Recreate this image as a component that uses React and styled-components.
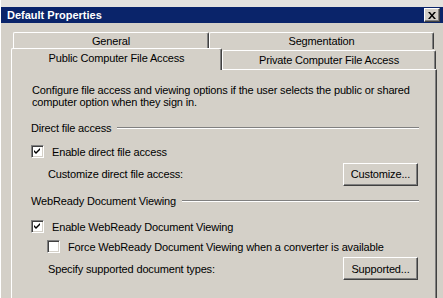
import React from 'react';
import styled, { createGlobalStyle } from 'styled-components';

const GlobalStyle = createGlobalStyle`
	html, body {
		margin: 0;
		padding: 0;
		width: 443px;
		height: 298px;
		overflow: hidden;
		background: #d4d0c8;
	}
	body {
		font-family: "Liberation Sans", Arial, sans-serif;
		font-size: 11px;
		letter-spacing: -0.15px;
		color: #000;
	}
`;

const Window = styled.div`
	width: 443px;
	height: 298px;
	overflow: hidden;
	background: #d4d0c8;
	border-left: 1px solid #ffffff;
	box-sizing: border-box;
	display: flex;
	flex-direction: column;
	white-space: nowrap;
`;

const TopStrip = styled.div`
	height: 7px;
	background: #e4e2de;
`;

const TitleBar = styled.div`
	height: 16px;
	background: #0a246a;
	display: flex;
	align-items: center;
	justify-content: space-between;
	padding: 0 3px 0 6px;
	color: #ffffff;
	font-weight: bold;
	font-size: 11px;
	letter-spacing: 0;
`;

const CloseBtn = styled.div`
	width: 14px;
	height: 12px;
	background: #d4d0c8;
	border-top: 1px solid #ffffff;
	border-left: 1px solid #ffffff;
	border-right: 1px solid #404040;
	border-bottom: 1px solid #404040;
	box-shadow: inset -1px -1px 0 #808080;
	display: flex;
	align-items: center;
	justify-content: center;
`;

const Body = styled.div`
	padding: 9px 6px 0 10px;
	display: flex;
	flex-direction: column;
	flex: 1;
`;

const TabRow = styled.div`
	display: flex;
	align-items: flex-end;
	height: ${p => p.$h}px;
	padding-left: ${p => p.$indent || 0}px;
`;

const Tab = styled.div`
	width: ${p => p.$w}px;
	height: ${p => p.$h}px;
	box-sizing: border-box;
	background: #d4d0c8;
	border-top: 1px solid #ffffff;
	border-left: 1px solid #ffffff;
	border-right: 1px solid #404040;
	border-radius: 2px 2px 0 0;
	box-shadow: inset -1px 0 0 #808080;
	display: flex;
	align-items: center;
	justify-content: center;
	padding-bottom: ${p => (p.$active ? 3 : 1)}px;
	${p =>
		p.$active &&
		`
		position: relative;
		z-index: 1;
		margin-bottom: -1px;
		height: ${p.$h + 1}px;
	`}
`;

const Panel = styled.div`
	flex: 1;
	background: #d4d0c8;
	border-top: 1px solid #ffffff;
	border-left: 1px solid #ffffff;
	border-right: 1px solid #404040;
	box-shadow: inset -1px 0 0 #808080;
	padding: 14px 18px 0 19px;
	display: flex;
	flex-direction: column;
`;

const Desc = styled.div`
	line-height: 12px;
	margin-left: 1px;
`;

const GroupHeader = styled.div`
	display: flex;
	align-items: center;
	height: 13px;
	margin-top: ${p => p.$mt}px;
	margin-right: -1px;
	gap: 6px;
	&::after {
		content: '';
		flex: 1;
		height: 0;
		border-top: 1px solid #808080;
		border-bottom: 1px solid #ffffff;
	}
`;

const Row = styled.div`
	display: flex;
	align-items: center;
	justify-content: space-between;
	height: ${p => p.$h}px;
	margin-top: ${p => p.$mt}px;
	padding-left: ${p => p.$indent || 0}px;
`;

const CheckRow = styled.label`
	display: flex;
	align-items: center;
	gap: 8px;
	height: 13px;
	margin-top: ${p => p.$mt}px;
	padding-left: ${p => p.$indent || 0}px;
`;

const Box = styled.span`
	width: 13px;
	height: 13px;
	box-sizing: border-box;
	background: #ffffff;
	border-top: 1px solid #808080;
	border-left: 1px solid #808080;
	border-right: 1px solid #ffffff;
	border-bottom: 1px solid #ffffff;
	box-shadow: inset 1px 1px 0 #404040, inset -1px -1px 0 #d4d0c8;
	display: flex;
	align-items: center;
	justify-content: center;
	flex-shrink: 0;
`;

const Button = styled.div`
	width: 75px;
	height: 23px;
	box-sizing: border-box;
	background: #d4d0c8;
	border-top: 1px solid #ffffff;
	border-left: 1px solid #ffffff;
	border-right: 1px solid #404040;
	border-bottom: 1px solid #404040;
	box-shadow: inset -1px -1px 0 #808080;
	display: flex;
	align-items: center;
	justify-content: center;
`;

const Check = ({ checked, children, mt, indent }) => (
	<CheckRow $mt={mt} $indent={indent}>
		<Box>
			{checked && (
				<svg width="7" height="7" viewBox="0 0 7 7">
					<path d="M0 2 L2 4 L6 0 V2 L2 6 L0 4 Z" fill="#000" />
				</svg>
			)}
		</Box>
		<span>{children}</span>
	</CheckRow>
);

const App = () => {
	return (
		<Window>
			<GlobalStyle />
			<TopStrip />
			<TitleBar>
				<span>Default Properties</span>
				<CloseBtn>
					<svg width="8" height="7" viewBox="0 0 8 7">
						<path d="M0 0h2l2 2.5L6 0h2L5 3.5 8 7H6L4 4.5 2 7H0l3-3.5z" fill="#000" />
					</svg>
				</CloseBtn>
			</TitleBar>
			<Body>
				<TabRow $h={17} $indent={2}>
					<Tab $w={196} $h={17}>General</Tab>
					<Tab $w={225} $h={17}>Segmentation</Tab>
				</TabRow>
				<TabRow $h={20}>
					<Tab $w={211} $h={21} $active>Public Computer File Access</Tab>
					<Tab $w={214} $h={19}>Private Computer File Access</Tab>
				</TabRow>
				<Panel>
					<Desc>
						Configure file access and viewing options if the user selects the public or shared
						<br />
						computer option when they sign in.
					</Desc>
					<GroupHeader $mt={13}>Direct file access</GroupHeader>
					<Check checked mt={11}>Enable direct file access</Check>
					<Row $h={24} $mt={4} $indent={17}>
						<span>Customize direct file access:</span>
						<Button>Customize...</Button>
					</Row>
					<GroupHeader $mt={8}>WebReady Document Viewing</GroupHeader>
					<Check checked mt={13}>Enable WebReady Document Viewing</Check>
					<Check mt={7} indent={16}>
						Force WebReady Document Viewing when a converter is available
					</Check>
					<Row $h={23} $mt={4} $indent={17}>
						<span>Specify supported document types:</span>
						<Button>Supported...</Button>
					</Row>
				</Panel>
			</Body>
		</Window>
	);
};

export default App;
